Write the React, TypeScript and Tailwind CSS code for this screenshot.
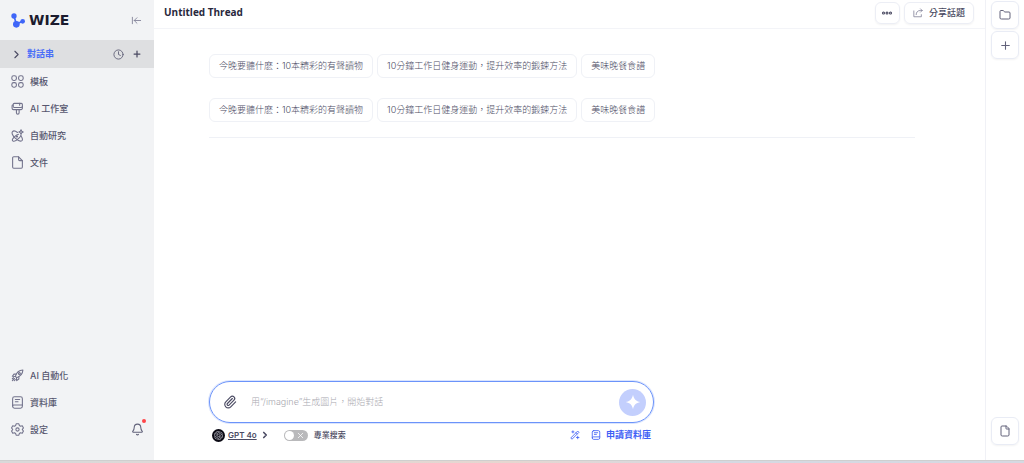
import type { ReactNode } from 'react';
import {
  ArrowLeftToLine,
  Bell,
  ChevronRight,
  Clock,
  Ellipsis,
  File,
  Folder,
  Paperclip,
  Plus,
  X,
} from 'lucide-react';
import { SiOpenai } from 'react-icons/si';

interface NavItem {
  label: string;
  icon: ReactNode;
}

interface GlyphProps {
  size?: number;
  strokeWidth?: number;
  children: ReactNode;
}

function Glyph({ size = 12, strokeWidth = 2, children }: GlyphProps) {
  return (
    <svg
      width={size}
      height={size}
      viewBox="0 0 24 24"
      fill="none"
      stroke="currentColor"
      strokeWidth={strokeWidth}
      strokeLinecap="round"
      strokeLinejoin="round"
      className="shrink-0"
      aria-hidden="true"
    >
      {children}
    </svg>
  );
}

function GridIcon() {
  return (
    <Glyph size={13}>
      <rect x="1.5" y="1.5" width="8.5" height="8.5" rx="3.5" />
      <rect x="14" y="1.5" width="8.5" height="8.5" rx="3.5" />
      <rect x="1.5" y="14" width="8.5" height="8.5" rx="3.5" />
      <rect x="14" y="14" width="8.5" height="8.5" rx="3.5" />
    </Glyph>
  );
}

function BrushIcon() {
  return (
    <Glyph size={13}>
      <rect x="4" y="2.5" width="17" height="7.5" rx="2" />
      <path d="M4 5.5H3.5A1.5 1.5 0 0 0 2 7v4.5A2.5 2.5 0 0 0 4.500 14H10" />
      <path d="M10 14h5v6a2.5 2.5 0 0 1-5 0zM21 8v3.500a2.5 2.5 0 0 1-2.5 2.500H15M16 2.500V6" />
    </Glyph>
  );
}

function ResearchIcon() {
  return (
    <Glyph size={13}>
      <path d="M12 6.500C8.500 3.800 4.500 3 2.800 4.700c-2.200 2.300.3 8 5 12.300s10.200 6.300 12.400 4.300c1.600-1.600.7-5-1.700-8.300" />
      <path d="M14 9.800c-2.300.4-4.600 1.700-6.700 3.800C3 17.500 1.500 20.500 3.200 21.800c2 1.500 7.300-.6 11.500-4.800 2-2 3.300-4 3.800-5.700" />
      <path d="m18.500 1.500 1.300 2.700 2.700 1.300-2.700 1.300-1.300 2.700-1.300-2.700-2.700-1.300 2.700-1.300z" />
      <circle cx="11" cy="14" r="1" />
    </Glyph>
  );
}

function PageIcon() {
  return (
    <Glyph size={13}>
      <path d="M14 1.500H5a2 2 0 0 0-2 2v17a2 2 0 0 0 2 2h14a2 2 0 0 0 2-2v-12z" />
      <path d="M14 1.500v5a2 2 0 0 0 2 2h5" />
    </Glyph>
  );
}

function RocketIcon() {
  return (
    <Glyph size={13}>
      <path d="M8 13.500C10 7 14.500 2.500 22 2c-.5 7.500-5 12-11.500 14z" />
      <path d="M9.500 9.500h-4l-3 4 5.500.5M14.500 14.500v4l-4 3-.5-5.500" />
      <circle cx="15.500" cy="8.500" r="1.800" />
      <path d="m6.500 17.500-4 4M4.500 16l-2 2M8 19.500l-2 2" />
    </Glyph>
  );
}

function BookIcon({ size = 12 }: { size?: number }) {
  return (
    <Glyph size={size}>
      <rect x="3" y="1.5" width="18" height="21" rx="3.5" />
      <path d="M3 18.500a2 2 0 0 1 2-2h16M8 6.500h8M8 10.500h5" />
    </Glyph>
  );
}

function GearIcon() {
  return (
    <Glyph size={13}>
      <path d="M9.500 1.500h5l1 3.200 2 1.200 3.300-.8 2.200 4-2.200 2.900 2.200 2.900-2.200 4-3.300-.8-2 1.200-1 3.200h-5l-1-3.200-2-1.200-3.300.8-2.200-4L3.200 12 1 9.100l2.200-4 3.300.8 2-1.200z" />
      <circle cx="12" cy="12" r="3" />
    </Glyph>
  );
}

function ShareIcon() {
  return (
    <Glyph size={10}>
      <path d="M2 7v14h18v-5" />
      <path d="M7.500 16c0-6 4-10 10-10H22M18 2l4 4-4 4" />
    </Glyph>
  );
}

function WandIcon() {
  return (
    <Glyph size={10}>
      <path d="M2.500 18.500l16-16 3 3-16 16zM14.500 6.500l3 3" />
      <path d="M7 2v5M4.500 4.500h5M18.500 15v6M15.500 18h6" />
    </Glyph>
  );
}

function LogoMark() {
  return (
    <svg width="14" height="15" viewBox="0 0 42 45" fill="#3f66f8" aria-hidden="true">
      <path d="M9 9 16 33 35 25" fill="none" stroke="#3f66f8" strokeWidth="5" />
      <circle cx="9" cy="9" r="8" />
      <circle cx="16" cy="34" r="10" />
      <circle cx="35" cy="25" r="7" />
    </svg>
  );
}

const topItems: NavItem[] = [
  { label: '模板', icon: <GridIcon /> },
  { label: 'AI 工作室', icon: <BrushIcon /> },
  { label: '自動研究', icon: <ResearchIcon /> },
  { label: '文件', icon: <PageIcon /> },
];

const bottomItems: NavItem[] = [
  { label: 'AI 自動化', icon: <RocketIcon /> },
  { label: '資料庫', icon: <BookIcon size={13} /> },
  { label: '設定', icon: <GearIcon /> },
];

const suggestions = [
  '今晚要聽什麽：10本精彩的有聲讀物',
  '10分鐘工作日健身運動，提升效率的鍛鍊方法',
  '美味晚餐食譜',
];

function NavLinkRow({ item }: { item: NavItem }) {
  return (
    <a href="#" className="flex h-[27px] flex-1 items-center gap-1.5 pl-[11px]">
      <span className="text-[#73738c]">{item.icon}</span>
      {item.label}
    </a>
  );
}

function Sidebar() {
  return (
    <aside className="flex w-[154px] shrink-0 flex-col bg-[#f2f3f5] pb-[17px] text-[9px] font-medium text-[#56566e]">
      <div className="flex h-10 items-center justify-between pr-3 pl-[11px]">
        <a href="#" className="flex items-center gap-1">
          <LogoMark />
          <span className="font-['DejaVu_Sans',sans-serif] text-[14px] leading-4 font-bold text-[#1c1b2e]">WIZE</span>
        </a>
        <button type="button" aria-label="Collapse sidebar" className="text-[#85859b]">
          <ArrowLeftToLine size={11} />
        </button>
      </div>

      <nav aria-label="Main navigation" className="flex flex-1 flex-col justify-between">
        <div>
          <div className="flex h-7 items-center gap-2 bg-[#dedfe1] pr-3 pl-[10px]">
            <a href="#" className="flex flex-1 items-center gap-1 font-bold text-[#4a6ef8]">
              <ChevronRight size={13} className="text-[#4b4b63]" />
              對話串
            </a>
            <button type="button" aria-label="History" className="text-[#62627a]">
              <Clock size={11} />
            </button>
            <button type="button" aria-label="New thread" className="text-[#4b4b63]">
              <Plus size={10} strokeWidth={3} />
            </button>
          </div>
          {topItems.map((item) => (
            <NavLinkRow key={item.label} item={item} />
          ))}
        </div>

        <div>
          {bottomItems.map((item) => (
            <div key={item.label} className="flex items-center">
              <NavLinkRow item={item} />
              {item.label === '設定' && (
                <button type="button" aria-label="Notifications" className="relative mr-[10px] text-[#62627a]">
                  <Bell size={13} />
                  <span className="absolute -top-1 -right-0.5 size-1 rounded-full bg-[#ff4548]" />
                </button>
              )}
            </div>
          ))}
        </div>
      </nav>
    </aside>
  );
}

function ThreadHeader() {
  return (
    <header className="flex h-[29px] items-center justify-between border-b border-[#f3f4f8] pr-[11px] pb-[3px] pl-[10px]">
      <h1 className="font-['Open_Sans','Noto_Sans_CJK_TC',sans-serif] text-[10px] font-bold text-[#28283c]">
        Untitled Thread
      </h1>
      <div className="flex gap-1">
        <button
          type="button"
          aria-label="More"
          className="flex h-[22px] w-[25px] items-center justify-center rounded-md border border-[#eceef5] text-[#3e3e57] shadow-xs"
        >
          <Ellipsis size={12} strokeWidth={4} />
        </button>
        <button
          type="button"
          className="flex h-[22px] items-center gap-1.5 rounded-md border border-[#eceef5] px-2 text-[9px] font-medium text-[#4b4b63] shadow-xs"
        >
          <span className="text-[#85859b]">
            <ShareIcon />
          </span>
          分享話題
        </button>
      </div>
    </header>
  );
}

function SuggestionRow() {
  return (
    <div className="flex flex-wrap gap-1">
      {suggestions.map((text) => (
        <button
          key={text}
          type="button"
          className="h-6 rounded-md border border-[#eff1f6] px-[9px] text-[9px] font-light whitespace-nowrap text-[#4b4b63]"
        >
          {text}
        </button>
      ))}
    </div>
  );
}

function Composer() {
  return (
    <form className="w-full max-w-[445px]" onSubmit={(e) => e.preventDefault()}>
      <div className="flex h-[42px] items-center rounded-full border border-[#6b93fa] pr-[7px] pl-[13px] ring-1 ring-[#6b93fa]/25">
        <button type="button" aria-label="Attach file" className="text-[#4b4b63]">
          <Paperclip size={14} />
        </button>
        <input
          type="text"
          aria-label="Message"
          placeholder="用“/imagine”生成圖片，開始對話"
          className="ml-3.5 min-w-0 flex-1 text-[9px] font-light outline-none placeholder:text-[#a9a9b0]"
        />
        <button
          type="submit"
          aria-label="Send"
          className="flex size-[27px] items-center justify-center rounded-full bg-[#c3cffd] text-white"
        >
          <svg width="16" height="16" viewBox="0 0 24 24" fill="currentColor" aria-hidden="true">
            <path d="M12 1c1.300 6.500 4.500 9.700 11 11-6.500 1.300-9.700 4.500-11 11-1.300-6.500-4.500-9.700-11-11 6.500-1.300 9.700-4.500 11-11z" />
          </svg>
        </button>
      </div>

      <div className="flex h-6 items-center justify-between px-[3px]">
        <div className="flex items-center gap-[14px]">
          <button type="button" className="flex items-center gap-[3px] text-[#4b4b63]">
            <span className="flex size-[13px] items-center justify-center rounded-full bg-[#0b0a14] text-[#b9b9c4]">
              <SiOpenai size={9} />
            </span>
            <span className="text-[8px] font-semibold underline underline-offset-1">GPT 4o</span>
            <ChevronRight size={10} strokeWidth={4} />
          </button>
          <label className="flex items-center gap-[6px] text-[8px] font-medium text-[#4b4b63]">
            <input type="checkbox" className="peer sr-only" />
            <span className="flex h-[11px] w-6 items-center justify-between rounded-full bg-[#b9b9bb] px-px text-white">
              <span className="size-[9px] rounded-full bg-white" />
              <X size={9} className="mr-0.5" />
            </span>
            專業搜索
          </label>
        </div>
        <div className="flex items-center gap-[11px] text-[#3f5ff5]">
          <button type="button" aria-label="Improve prompt">
            <WandIcon />
          </button>
          <button type="button" className="flex items-center gap-[5px] text-[9px] font-bold">
            <BookIcon size={10} />
            申請資料庫
          </button>
        </div>
      </div>
    </form>
  );
}

const railButton =
  'flex size-7 items-center justify-center rounded-md border border-[#e9ecf5] text-[#62627a] shadow-xs';

function RightRail() {
  return (
    <aside className="flex w-[39px] shrink-0 flex-col items-center justify-between border-l border-[#f0f1f6] pt-px pb-[15px]">
      <div className="flex flex-col gap-0.5">
        <button type="button" aria-label="Folders" className={railButton}>
          <Folder size={12} />
        </button>
        <button type="button" aria-label="Add" className={railButton}>
          <Plus size={13} />
        </button>
      </div>
      <button type="button" aria-label="Document" className={railButton}>
        <File size={12} />
      </button>
    </aside>
  );
}

export default function App() {
  return (
    <div className="flex min-h-screen flex-col bg-white font-['Inter','Noto_Sans_CJK_TC',sans-serif]">
      <div className="flex flex-1">
        <Sidebar />
        <div className="flex min-w-0 flex-1 flex-col">
          <ThreadHeader />
          <main className="flex flex-1 flex-col justify-between pt-[25px] pr-[70px] pb-[13px] pl-[55px]">
            <section className="flex flex-col gap-5 border-b border-[#eff1f6] pb-[15px]">
              <SuggestionRow />
              <SuggestionRow />
            </section>
            <Composer />
          </main>
        </div>
        <RightRail />
      </div>
      <div className="h-[3px] border-t border-[#cfcfcf] bg-linear-to-r from-[#d9d9d9] from-5% via-[#e6d6d0] via-50% to-[#d5d9e2] to-70%" />
    </div>
  );
}
